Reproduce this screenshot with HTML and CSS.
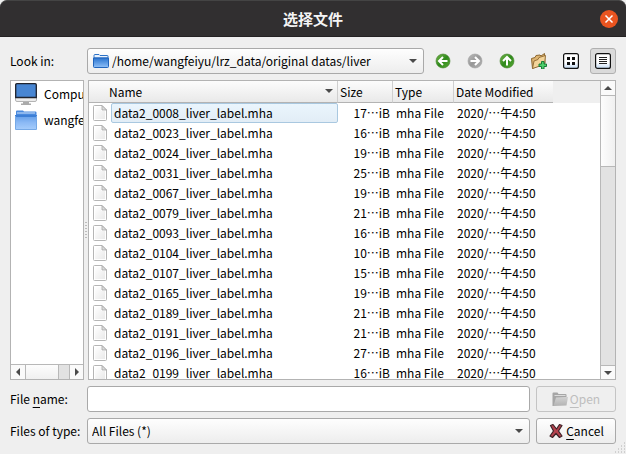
FILE: index.html
```html
<!DOCTYPE html>
<html lang="zh-CN">
<head>
<meta charset="utf-8">
<title>选择文件</title>
<link rel="stylesheet" href="styles.css">
</head>
<body>
<svg class="defs" aria-hidden="true">
  <defs>
    <linearGradient id="gBlue" x1="0" y1="0" x2="0" y2="1"><stop offset="0" stop-color="#5f9be6"/><stop offset=".5" stop-color="#8bb9f5"/><stop offset="1" stop-color="#a8cefc"/></linearGradient>
    <linearGradient id="gDeep" x1="0" y1="0" x2="0" y2="1"><stop offset="0" stop-color="#2a74cf"/><stop offset="1" stop-color="#8fc0f8"/></linearGradient>
    <linearGradient id="gGreen" x1="0" y1="0" x2="1" y2="1"><stop offset="0" stop-color="#79b74c"/><stop offset=".5" stop-color="#2f8a1c"/><stop offset="1" stop-color="#5cab35"/></linearGradient>
    <linearGradient id="gGray" x1="0" y1="0" x2="1" y2="1"><stop offset="0" stop-color="#bbb"/><stop offset=".5" stop-color="#989898"/><stop offset="1" stop-color="#b4b4b4"/></linearGradient>
    <linearGradient id="gView" x1="0" y1="0" x2="0" y2="1"><stop offset="0" stop-color="#fff"/><stop offset=".6" stop-color="#fff"/><stop offset="1" stop-color="#c3daf3"/></linearGradient>
    <linearGradient id="gPage" x1="0" y1="0" x2="1" y2="1"><stop offset="0" stop-color="#fff"/><stop offset="1" stop-color="#e9e9e9"/></linearGradient>
    <linearGradient id="gOpen" x1="0" y1="0" x2="0" y2="1"><stop offset="0" stop-color="#d2d2d2"/><stop offset="1" stop-color="#b2b2b2"/></linearGradient>
    <symbol id="page" viewBox="0 0 14 16"><path d="M.5 1.5q0-1 1-1H9L13.500 5v9.500q0 1-1 1h-11q-1 0-1-1z" fill="#fff" stroke="#b5b5b5"/><path d="M2 2h6.500v4H12v8H2z" fill="url(#gPage)"/><path d="M9 .5V5h4.500z" fill="#ddd" stroke="#a5a5a5" stroke-width=".8"/></symbol>
  </defs>
</svg>
<header class="titlebar">
  <h1>选择文件</h1>
  <button class="close" aria-label="关闭"><svg viewBox="0 0 18 18"><path d="M5.500 5.500l7 7M12.500 5.500l-7 7"/></svg></button>
</header>
<main class="dialog">
  <div class="row">
    <label class="caption" for="path">Look in:</label>
    <div class="combo has-icon">
      <svg class="combo-icon" viewBox="0 0 16 14"><path d="M1 2.500V1.500Q1 .5 2 .5h4l1 1h7.500q.5 0 .5.500v2H1z" fill="#e9f3ff" stroke="#2d72c6"/><path d="M.5 4h15v8.500q0 1-1 1h-13q-1 0-1-1z" fill="url(#gDeep)" stroke="#2265bc"/></svg>
      <select id="path"><option>/home/wangfeiyu/lrz_data/original datas/liver</option></select>
    </div>
    <div class="tools">
      <button class="tool" aria-label="Back"><svg viewBox="0 0 16 16"><circle cx="8" cy="8" r="7" fill="url(#gGreen)" stroke="#408029" stroke-width=".6"/><path d="M12.500 8H5M8 4L4 8 8 12" class="arrow"/></svg></button>
      <button class="tool" aria-label="Forward" disabled><svg viewBox="0 0 16 16"><circle cx="8" cy="8" r="7" fill="url(#gGray)" stroke="#a0a0a0" stroke-width=".6"/><path d="M3.500 8H11M8 4L12 8 8 12" class="arrow"/></svg></button>
      <button class="tool" aria-label="Parent Directory"><svg viewBox="0 0 16 16"><circle cx="8" cy="8" r="7" fill="url(#gGreen)" stroke="#408029" stroke-width=".6"/><path d="M8 12.500V5M4 8L8 4 12 8" class="arrow"/></svg></button>
      <button class="tool" aria-label="Create New Folder"><svg viewBox="0 0 16 16"><path d="M.5 5.500L4 4.500l1-2L9 2l1 1L13.500.500 14 10 1.500 15.500z" fill="#dcb472" stroke="#8d6730"/><path d="M1.500 15.500L3 8l4-1.500 1-2 6.500-2-1 9z" fill="#f3d499" stroke="#8d6730" stroke-width=".9"/><path d="M10.500 8.500H13V11h2.500v2.500H13V16h-2.500v-2.500H8V11h2.500z" fill="#4fcf6c" stroke="#197b37"/></svg></button>
      <button class="tool" aria-label="List View"><svg viewBox="0 0 16 16"><rect x=".6" y=".6" width="14.800" height="14.800" rx="2" fill="url(#gView)" stroke="#111" stroke-width="1.200"/><path d="M4 4h3v3H4zM9 4h3v3H9zM4 9h3v3H4zM9 9h3v3H9z" fill="#111"/></svg></button>
      <button class="tool checked" aria-label="Detail View" aria-pressed="true"><svg viewBox="0 0 16 16"><rect x=".6" y=".6" width="14.800" height="14.800" rx="2" fill="url(#gView)" stroke="#111" stroke-width="1.200"/><path d="M4 4.500h8M4 6.500h8M4 8.500h8M4 10.500h8" stroke="#222"/></svg></button>
    </div>
  </div>

  <div class="panes">
    <nav class="sidebar" aria-label="Places">
      <ul>
        <li><svg viewBox="0 0 22 22"><rect x=".5" y=".5" width="21" height="18" rx="1.500" fill="#ececec" stroke="#b4b4b4"/><path d="M.7 14.500V2Q.7.700 2 .700h18q1.300 0 1.300 1.300v12.500z" fill="#4886d3" stroke="#20242f" stroke-width="1.300"/><path d="M8 19h6v1.500h2V22H6v-1.500h2z" fill="#aaa"/></svg><a href="#computer">Computer</a></li>
        <li><svg viewBox="0 0 22 22"><path d="M1 5V2.500Q1 1.500 2 1.500h6l1 1h11.500q1 0 1 1V8H1z" fill="#4a8ade"/><path d="M2 4h18" stroke="#cfe3fb"/><path d="M0 6h22v14q0 1-1 1H1q-1 0-1-1z" fill="url(#gBlue)"/><path d="M0 6h22v2H0z" fill="#3d7fd6"/><path d="M.5 7v13q0 .5.500.500h20q.5 0 .5-.500V7" fill="none" stroke="#76a9e6"/></svg><a href="#home">wangfeiyu</a></li>
      </ul>
      <div class="scroll horizontal">
        <button aria-label="Scroll left"><i class="tri left"></i></button><span class="thumb"></span><button aria-label="Scroll right"><i class="tri right"></i></button>
      </div>
    </nav>
    <div class="splitter" aria-hidden="true"></div>
    <section class="files">
      <div class="viewport">
        <table>
          <colgroup><col class="c-name"><col class="c-size"><col class="c-type"><col class="c-date"><col></colgroup>
          <thead><tr><th class="sorted">Name<i class="tri down"></i></th><th>Size</th><th>Type</th><th>Date Modified</th><td></td></tr></thead>
          <tbody id="rows"></tbody>
        </table>
      </div>
      <div class="scroll vertical">
        <button aria-label="Scroll up"><i class="tri up"></i></button><span class="thumb"></span><button aria-label="Scroll down"><i class="tri down"></i></button>
      </div>
    </section>
  </div>

  <div class="row">
    <label class="caption" for="name">File <u>n</u>ame:</label>
    <input id="name" class="field" type="text">
    <button class="action" disabled><svg viewBox="0 0 16 16"><path d="M.5 2.500q0-1 1-1h4l1 1.500h7q1 0 1 1v3L2 15H.5z" fill="#a6a6a6"/><path d="M2.500 4.500h11" stroke="#dcdcdc"/><path d="M4 6.500l9-.500h3l-1.500 8.500-13 .5z" fill="url(#gOpen)"/></svg><span><u>O</u>pen</span></button>
  </div>
  <div class="row">
    <label class="caption" for="type">Files of type:</label>
    <div class="combo"><select id="type"><option>All Files (*)</option></select></div>
    <button class="action"><svg viewBox="0 0 16 16"><path d="M2.500 2.500l2.500-1 3.500 4.500 3-4.500 2.500 1L10.500 8l3.500 5-2.500 1.500-3.500-4-3.500 4L2 13l3.500-5z" fill="#b4424e" stroke="#3d2226" stroke-width="1.200" stroke-linejoin="round"/></svg><span><u>C</u>ancel</span></button>
  </div>
</main>
<svg class="grip" viewBox="0 0 12 12" aria-hidden="true"><path d="M10 1h1M7 4h1M10 4h1M4 7h1M7 7h1M10 7h1M1 10h1M4 10h1M7 10h1M10 10h1"/></svg>
<script src="files.js"></script>
</body>
</html>
```
FILE: files.js
```js
const files = [
  ["0008", 17], ["0023", 16], ["0024", 19], ["0031", 25], ["0067", 19],
  ["0079", 21], ["0093", 16], ["0104", 10], ["0107", 15], ["0165", 19],
  ["0189", 21], ["0191", 21], ["0196", 27], ["0199", 16]
];
document.getElementById("rows").innerHTML = files.map(([id, size], i) => `
  <tr${i === 0 ? ' class="current"' : ""}>
    <td><div class="file"><svg><use href="#page"/></svg><span>data2_${id}_liver_label.mha</span></div></td>
    <td class="size">${size}…iB</td><td>mha File</td><td>2020/…午4:50</td><td></td>
  </tr>`).join("");
```
FILE: styles.css
```css
* { box-sizing: border-box; }
html, body { height: 100%; }
body {
  margin: 0;
  display: flex;
  flex-direction: column;
  background: #efefef;
  color: #000;
  font: 12px/20px "Noto Sans CJK SC", sans-serif;
}
button, input, select { font: inherit; color: inherit; margin: 0; }
svg { display: block; flex: none; }
.defs { position: absolute; width: 0; height: 0; }

.titlebar {
  position: relative;
  flex: none;
  height: 37px;
  display: flex;
  align-items: center;
  justify-content: center;
  background: #312f30;
  border-top: 1px solid #444;
  border-bottom: 1px solid #242223;
  border-radius: 7px 7px 0 0;
}
h1 { margin: 0; color: #f4f4f4; font-size: 15px; font-weight: 700; }
.close {
  position: absolute;
  right: 8px;
  width: 18px;
  height: 18px;
  padding: 0;
  border: 0;
  border-radius: 50%;
  background: #e95420;
}
.close path { stroke: #fff; stroke-width: 1.5; }

.dialog {
  flex: 1;
  min-height: 0;
  display: flex;
  flex-direction: column;
  gap: 6px;
  padding: 11px 10px 10px;
}
.row { display: flex; flex: none; gap: 6px; }
.caption { width: 71px; line-height: 26px; white-space: nowrap; }
u { text-underline-offset: 3px; }

.combo { position: relative; flex: 1; min-width: 0; }
.combo::after {
  content: "";
  position: absolute;
  right: 7px;
  top: 11px;
  border: 4px solid transparent;
  border-top-color: #4a4a4a;
  border-bottom: 0;
}
.combo select, .field, .action {
  height: 26px;
  border: 1px solid #a9a9a9;
  border-radius: 3px;
}
.combo select {
  appearance: none;
  display: block;
  width: 100%;
  padding: 0 24px 0 4px;
  background: linear-gradient(#fefefe, #ededed);
}
.combo.has-icon select { padding-left: 24px; }
.combo-icon { position: absolute; left: 6px; top: 6px; width: 16px; height: 14px; }
.field { flex: 1; min-width: 0; padding: 0 4px; background: #fff; }

.tools { display: flex; gap: 6px; }
.tool {
  display: grid;
  place-items: center;
  width: 26px;
  height: 26px;
  padding: 0;
  border: 1px solid transparent;
  border-radius: 3px;
  background: none;
}
.tool svg { width: 16px; height: 16px; }
.tool.checked { background: #dadada; border-color: #b0b0b0; }
.arrow { fill: none; stroke: #fff; stroke-width: 2; }

.action {
  display: flex;
  align-items: center;
  justify-content: center;
  gap: 2px;
  width: 80px;
  padding: 0;
  background: linear-gradient(#fefefe, #ededed);
}
.action svg { width: 16px; height: 16px; }
.action:disabled { color: #bebebe; border-color: #c4c4c4; background: #efefef; }

.panes { flex: 1; min-height: 0; display: flex; }
.sidebar, .files { border: 1px solid #b3b3b3; background: #fff; overflow: hidden; }
.sidebar { width: 74px; display: flex; flex-direction: column; }
.sidebar ul { flex: 1; margin: 0; padding: 0; list-style: none; overflow: hidden; }
.sidebar li { display: flex; align-items: center; gap: 7px; height: 26px; padding-left: 4px; }
.sidebar svg { width: 22px; height: 22px; }
.sidebar a { color: inherit; text-decoration: none; }
.splitter { width: 4px; align-self: center; height: 18px; background: radial-gradient(circle, #bbb 1px, transparent 1px) 0 0 / 4px 3px; }
.files { flex: 1; min-width: 0; display: flex; }
.viewport { flex: 1; min-width: 0; overflow: hidden; }

table { width: 100%; table-layout: fixed; border-collapse: separate; border-spacing: 0; }
.c-name { width: 249px; }
.c-size { width: 55px; }
.c-type { width: 61px; }
.c-date { width: 99px; }
th, td { padding: 0 3px; text-align: left; font-weight: 400; white-space: nowrap; overflow: hidden; }
thead th, thead td { height: 22px; }
th { padding: 0 2px; border-right: 1px solid #cfcfcf; border-bottom: 1px solid #b3b3b3; background: linear-gradient(#fcfcfc, #e9e9e9); }
th:nth-child(4) { border-right: 0; }
thead td { background: #efefef; }
th.sorted { padding-left: 20px; }
th.sorted .tri { float: right; margin: 7px 2px 0 0; }
tbody td { height: 20px; }
tbody td:first-child { padding: 0; }
.size { text-align: right; }
.file { display: flex; align-items: center; height: 20px; padding-left: 4px; gap: 4px; }
.file svg { width: 14px; height: 16px; }
.file span { flex: 1; padding-left: 2px; line-height: 18px; border: 1px solid transparent; }
.current .file span { border-color: #a9c8e0; border-radius: 2px; background: linear-gradient(#eaf5fd, #e2edf6); }

.tri { display: block; border: 4px solid transparent; }
.tri.up { border-top: 0; border-bottom-color: #4a4a4a; }
.tri.down { border-bottom: 0; border-top-color: #4a4a4a; }
.tri.left { border-left: 0; border-right-color: #4a4a4a; }
.tri.right { border-right: 0; border-left-color: #4a4a4a; }
.scroll { display: flex; flex: none; background: #e2e2e2; }
.scroll button { display: grid; place-items: center; width: 14px; height: 14px; padding: 0; border: 0; background: #fafafa; }
.horizontal { height: 15px; border-top: 1px solid #b8b8b8; }
.horizontal .thumb { width: 34px; border: solid #b8b8b8; border-width: 0 1px; background: linear-gradient(#fdfdfd, #f0f0f0); }
.horizontal button:last-child { margin-left: auto; border-left: 1px solid #b8b8b8; }
.vertical { width: 15px; flex-direction: column; border-left: 1px solid #b8b8b8; }
.vertical .thumb { height: 72px; border: solid #b8b8b8; border-width: 1px 0; background: linear-gradient(90deg, #fdfdfd, #f0f0f0); }
.vertical button:last-child { margin-top: auto; border-top: 1px solid #b8b8b8; }

.grip { position: fixed; right: 0; bottom: 0; width: 12px; height: 12px; }
.grip path { stroke: #b0b0b0; }
```
